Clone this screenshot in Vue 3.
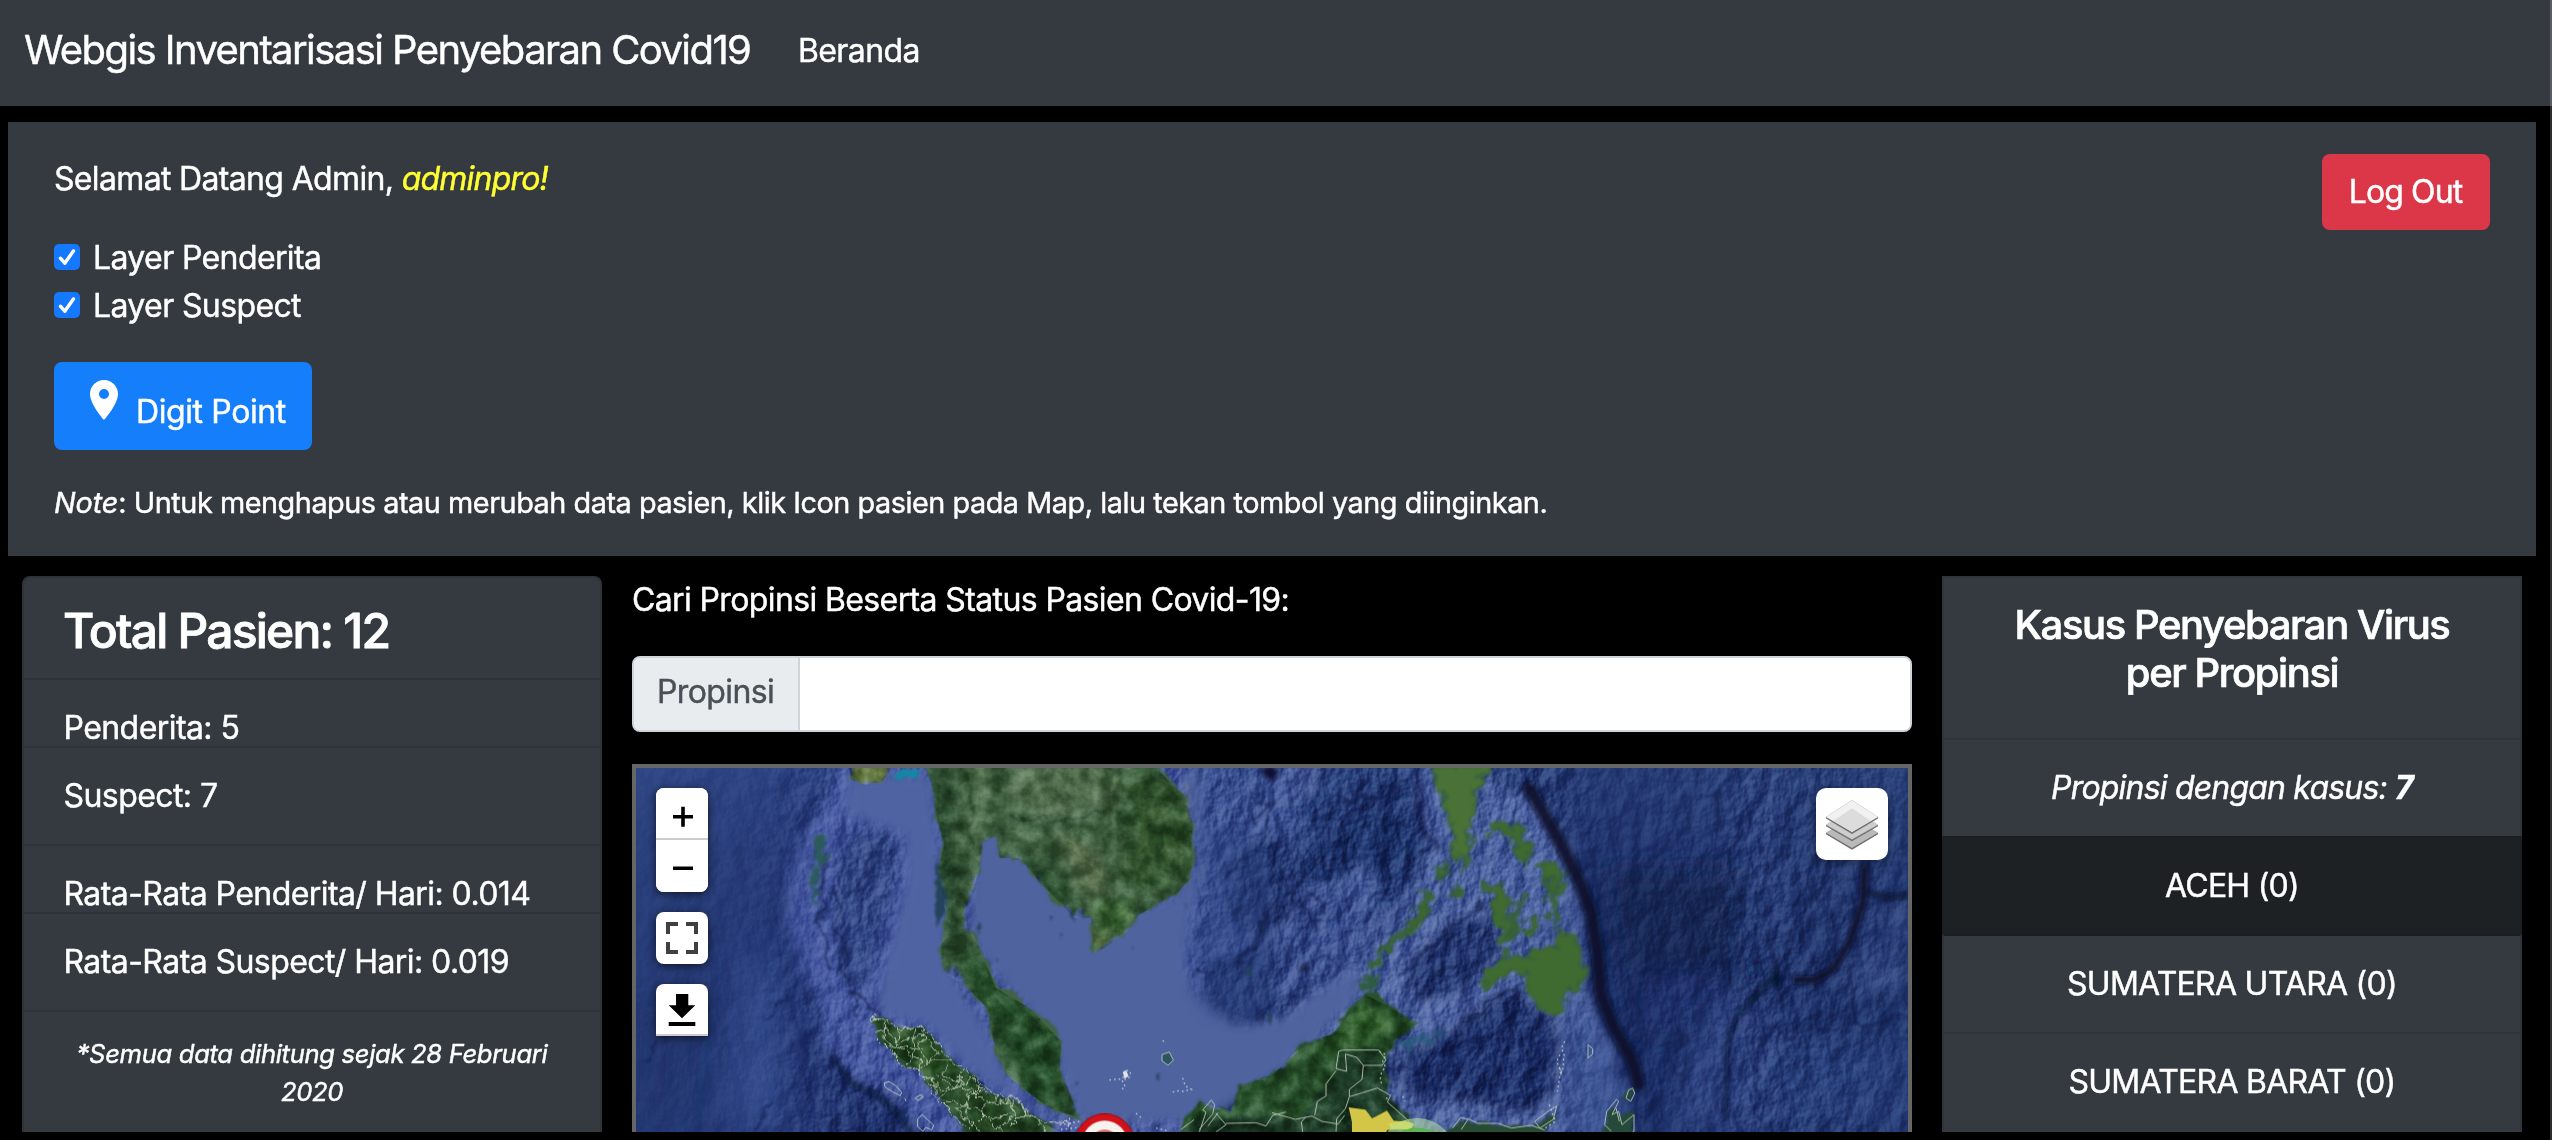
<script setup>
import { ref } from 'vue'

const layers = ref([
  { name: 'Layer Penderita', on: true },
  { name: 'Layer Suspect', on: true },
])

const stats = [
  { text: 'Penderita: 5', tight: true },
  { text: 'Suspect: 7', tight: false },
  { text: 'Rata-Rata Penderita/ Hari: 0.014', tight: true },
  { text: 'Rata-Rata Suspect/ Hari: 0.019', tight: false },
]

const provinces = [
  { name: 'ACEH', cases: 0, active: true },
  { name: 'SUMATERA UTARA', cases: 0, active: false },
  { name: 'SUMATERA BARAT', cases: 0, active: false },
]
</script>

<template>
  <div class="page">
    <nav class="navbar">
      <a class="brand">Webgis Inventarisasi Penyebaran Covid19</a>
      <a class="nav-link">Beranda</a>
    </nav>

    <div class="body">
      <section class="panel">
        <div class="panel-main">
          <p class="welcome">Selamat Datang Admin, <em>adminpro!</em></p>
          <div class="checks">
            <label v-for="l in layers" :key="l.name" class="check">
              <input v-model="l.on" type="checkbox" class="check-input" />
              <span class="box">
                <svg v-if="l.on" viewBox="0 0 26 26" width="26" height="26">
                  <path d="M6.4 14.2l4.4 5L19.4 7" fill="none" stroke="#fff" stroke-width="3.4" stroke-linecap="round" stroke-linejoin="round" />
                </svg>
              </span>
              <span>{{ l.name }}</span>
            </label>
          </div>
          <button class="btn digit">
            <svg class="pin" viewBox="0 0 14 20" width="28" height="40">
              <path d="M7 0C3.13 0 0 3.13 0 7c0 5.25 7 13 7 13s7-7.750 7-13c0-3.870-3.130-7-7-7zm0 9.500a2.500 2.500 0 1 1 0-5 2.500 2.500 0 0 1 0 5z" fill="#fff" />
            </svg>
            <span>Digit Point</span>
          </button>
          <p class="note"><em>Note</em>: Untuk menghapus atau merubah data pasien, klik Icon pasien pada Map, lalu tekan tombol yang diinginkan.</p>
        </div>
        <button class="btn logout">Log Out</button>
      </section>

      <div class="columns">
        <aside class="card totals">
          <h3>Total Pasien: 12</h3>
          <p v-for="s in stats" :key="s.text" class="stat" :class="{ tight: s.tight }">{{ s.text }}</p>
          <p class="since">*Semua data dihitung sejak 28 Februari 2020</p>
        </aside>

        <main class="center">
          <p class="search-title">Cari Propinsi Beserta Status Pasien Covid-19:</p>
          <div class="input-group">
            <span class="addon">Propinsi</span>
            <input class="field" type="text" />
          </div>

          <div class="map">
            <svg class="terrain" viewBox="0 0 3816 1092" width="1272" height="364" preserveAspectRatio="none">
              <defs>
                <linearGradient id="deep" x1="0" x2="1" y1="0" y2="0">
                  <stop offset="0" stop-color="#2a417f" />
                  <stop offset=".13" stop-color="#26397a" />
                  <stop offset=".45" stop-color="#263b78" />
                  <stop offset=".76" stop-color="#1b2e68" />
                  <stop offset="1" stop-color="#22376f" />
                </linearGradient>
                <linearGradient id="fall" x1="0" x2="0" y1="0" y2="1">
                  <stop offset="0" stop-color="#3a538f" stop-opacity=".35" />
                  <stop offset=".5" stop-color="#1b2c60" stop-opacity=".2" />
                  <stop offset="1" stop-color="#1b2e64" stop-opacity=".4" />
                </linearGradient>
                <linearGradient id="rough" x1="0" x2="1" y1="0" y2="0">
                  <stop offset="0" stop-color="#fff" stop-opacity=".12" />
                  <stop offset=".1" stop-color="#fff" stop-opacity=".25" />
                  <stop offset=".16" stop-color="#fff" stop-opacity=".8" />
                  <stop offset=".7" stop-color="#fff" stop-opacity="1" />
                  <stop offset=".76" stop-color="#fff" stop-opacity=".4" />
                  <stop offset=".84" stop-color="#fff" stop-opacity=".5" />
                  <stop offset=".88" stop-color="#fff" stop-opacity=".8" />
                  <stop offset="1" stop-color="#fff" stop-opacity=".5" />
                </linearGradient>
                <mask id="roughness"><rect width="3816" height="1092" fill="url(#rough)" /></mask>
                <filter id="b8" x="-20%" y="-20%" width="140%" height="140%"><feGaussianBlur stdDeviation="8" /></filter>
                <filter id="b18" x="-20%" y="-20%" width="140%" height="140%"><feGaussianBlur stdDeviation="18" /></filter>
                <filter id="b40" x="-40%" y="-40%" width="180%" height="180%"><feGaussianBlur stdDeviation="40" /></filter>
                <filter id="ridge" x="-10%" y="-10%" width="120%" height="120%" color-interpolation-filters="sRGB">
                  <feTurbulence type="fractalNoise" baseFrequency=".018" numOctaves="3" seed="5" result="n" />
                  <feDisplacementMap in="SourceGraphic" in2="n" scale="60" xChannelSelector="R" yChannelSelector="G" />
                  <feGaussianBlur stdDeviation="3.500" />
                </filter>
                <filter id="coast" x="-5%" y="-5%" width="110%" height="110%" color-interpolation-filters="sRGB">
                  <feTurbulence type="fractalNoise" baseFrequency=".03" numOctaves="3" seed="9" result="n" />
                  <feDisplacementMap in="SourceGraphic" in2="n" scale="30" xChannelSelector="R" yChannelSelector="G" />
                  <feGaussianBlur stdDeviation="2.500" />
                </filter>
                <filter id="isles" x="-5%" y="-5%" width="110%" height="110%" color-interpolation-filters="sRGB">
                  <feTurbulence type="fractalNoise" baseFrequency=".03" numOctaves="4" seed="21" result="n" />
                  <feDisplacementMap in="SourceGraphic" in2="n" scale="70" xChannelSelector="R" yChannelSelector="G" />
                  <feGaussianBlur stdDeviation="5" />
                </filter>
                <filter id="wobble" x="-5%" y="-5%" width="110%" height="110%" color-interpolation-filters="sRGB">
                  <feTurbulence type="fractalNoise" baseFrequency=".03" numOctaves="3" seed="3" result="n" />
                  <feDisplacementMap in="SourceGraphic" in2="n" scale="36" xChannelSelector="R" yChannelSelector="G" />
                </filter>
                <filter id="relief" x="0" y="0" width="100%" height="100%" color-interpolation-filters="sRGB">
                  <feTurbulence type="fractalNoise" baseFrequency=".016 .012" numOctaves="4" seed="12" />
                  <feColorMatrix values="0 0 0 0 0  0 0 0 0 0  0 0 0 0 0  1.500 0 0 0 -.2" />
                  <feDiffuseLighting surfaceScale="12" lighting-color="#fff"><feDistantLight azimuth="215" elevation="30" /></feDiffuseLighting>
                </filter>
                <filter id="soil" x="0" y="0" width="100%" height="100%" color-interpolation-filters="sRGB">
                  <feTurbulence type="fractalNoise" baseFrequency=".018" numOctaves="5" seed="33" />
                  <feColorMatrix values="1.800 0 0 0 -.45  1.800 0 0 0 -.45  1.800 0 0 0 -.45  0 0 0 0 1" />
                </filter>
                <clipPath id="sumatra">
                  <path d="M710 755L745 757 800 782 865 782 905 830 950 880 1000 910 1035 945 1060 970 1100 985 1150 1000 1180 1040 1230 1060 1270 1092H995L955 1040 905 990 880 960 850 910 800 885 760 845 720 805Z" />
                </clipPath>
                <clipPath id="land">
                  <path d="M640 0H765L740 40 690 50 645 35ZM870 0L890 60 900 140 925 230 905 300 930 440 915 540 920 610 984 650 1054 720 1075 830 1120 930 1240 1020 1330 1050 1272 900 1275 820 1180 720 1080 660 1030 540 984 440 1030 310 1040 220 1080 205 1092 270 1150 270 1220 350 1315 450 1365 450 1375 560 1470 495 1510 440 1620 380 1665 330 1670 170 1650 90 1560 0ZM710 755L865 782 950 880 1100 985 1180 1040 1270 1092H995L905 990 850 910 760 845ZM1634 1092L1689 1000 1784 1030 1814 950 1908 925 2008 820 2088 800 2188 680 2268 720 2348 770 2238 890 2328 1092Z" />
                </clipPath>
              </defs>

              <!-- sea floor -->
              <rect width="3816" height="1092" fill="url(#deep)" />
              <rect width="3816" height="1092" fill="url(#fall)" />
              <g filter="url(#b40)">
                <path d="M2150 60h330l40 180-260 120-360-40z" fill="#1f316a" />
                <path d="M2900 300h400v500h-300z" fill="#172655" />
                <path d="M3000 620h280v150h-280z" fill="#1c2f6b" />
                <path d="M3430 820h386v272h-386z" fill="#263c79" />
                <path d="M3680 560l136 40v60l-200-20zM3720 420l96-10v130z" fill="#3c5290" />
                <path d="M3380 0h40v560h-40z" fill="#2d4484" />
                <path d="M330 560l90 20 40 500h-200z" fill="#31498a" />
                <path d="M0 700l160 60-40 300L0 1000z" fill="#22356e" />
                <path d="M3180 740l200-80 80 430h-360z" fill="#2b407e" />
              </g>
              <g filter="url(#b18)">
                <path d="M600-20L560 120 490 230 460 340 455 450 490 590 550 700 560 830 640 920 770 980 870 1110H1700V-20Z" fill="#4459a0" />
                <path d="M650 190l90-15 55 40-20 160-50 180-40 130-70-50-30-220 20-150z" fill="#314786" />
                <path d="M1660-20h300l60 200-120 340-220 100z" fill="#3a5192" />
                <path d="M1908 450l90-120 150 20 110 80-100 140-250 150z" fill="#394e8d" />
                <path d="M1780 300l60-80 140 0 20 180-120 120-100-60z" fill="#22346e" />
                <path d="M1860 800L2040 650 2170 560 2260 440 2330 340 2380 250 2340 60 2360-20H2490L2620 60 2740 110 2800 250 2830 380 2850 620 2880 740 2950 880 2880 1000 2840 1110H2240L2270 850 2120 800 1900 960Z" fill="#495e9e" />
                <path d="M2160 300l50 10 20 60-60 40-60-50z" fill="#4c62a2" />
                <path d="M1960 0l100-10-30 80-90 10z" fill="#4b609f" />
                <path d="M2310 620L2340 560 2440 460 2510 430 2560 480 2600 540 2540 610 2450 680 2350 700Z" fill="#22346f" />
                <path d="M2300 850L2440 790 2620 660 2690 700 2760 760 2775 860 2740 990 2660 1040 2500 1000 2350 1000 2280 940Z" fill="#1c2d68" />
                <path d="M2800 760l60 20 120 200-40 120h-160z" fill="#3e5594" />
              </g>
              <g class="relief" mask="url(#roughness)">
                <rect width="3816" height="1092" filter="url(#relief)" />
              </g>

              <!-- shallow shelf -->
              <g filter="url(#b18)">
                <path d="M640 20H890L940 600 1060 800 1140 980 1290 1060 1240 1060 1000 910 870 770 740 740 720 700 770 500 810 330 810 200 700 160 620 130Z" fill="#4f64a3" />
                <path d="M1020 190H1180L1360 440 1600 400 1690 280 1640 20H1690L1704 300 1660 470 1650 590 1680 680 1800 765 1930 760 2060 670 2160 590 2170 680 2000 850 1860 970 1700 1060H1330L1240 800 1000 520Z" fill="#4f649f" />
              </g>
              <path d="M1704 180l-4 130 20 70-60 110 0 90 55 30-50 60 50 75 90 20 105-40V330l-60-150z" fill="#2f4583" opacity=".4" filter="url(#b18)" />

              <!-- trenches and ridges -->
              <g fill="none" stroke="#080f2a" stroke-linecap="round" stroke-linejoin="round" filter="url(#b8)">
                <path d="M2680 60L2770 220 2830 340 2865 430 2885 560 2895 680 2930 770 2990 880 3008 950" stroke-width="40" opacity=".9" />
                <path d="M3425 580L3405 640 3350 695 3300 750 3274 830 3270 1040" stroke-width="14" opacity=".75" />
                <path d="M3686 300L3682 400 3642 520 3590 605 3540 635 3480 636" stroke-width="24" opacity=".9" />
                <path d="M3700 375L3760 388 3816 382" stroke-width="18" opacity=".85" />
                <path d="M590 870L650 950 730 985 790 1040 820 1092" stroke-width="16" opacity=".7" />
                <path d="M2345 60l15 130 50 50" stroke-width="14" opacity=".5" />
                <path d="M3425 620v34" stroke-width="20" opacity=".8" />
              </g>
              <g fill="none" stroke="#121d48" stroke-width="7" stroke-linejoin="round" filter="url(#ridge)">
                <path d="M600 340l5 130 20 150 40 120M640 380l60-60 10-90M570 260l-20 160 30 180M640 660l60 60 30 30M440 690l-60 70M60 820l-40 60M400 1010l-50 82" opacity=".75" />
                <path d="M3402 790l90 15 110-30 140-15 74-22M3000 610l180-10 120-30M3360 700v240l15 152M3150 790l-40 70 20 90M3060 990l-50 60" opacity=".7" />
                <path d="M2300 620l90-90 130-110 10-40M2480 760l160-110M2350 700l60-80 90-60M2120 100l110-20 90-50M1770 330l110-110 30-120M1790 600l70-80 40-100M1660 625l70-10 30-30M2500 60l60-60" opacity=".75" />
                <path d="M1930 460l60-60 60 80M2010 600l40-30 60 20M2000 350l60 60-30 80M1850 160l50-60M1840 60l60 60" opacity=".6" />
              </g>
              <path d="M1990 600l20-12 14 16-22 12z" fill="#0a1030" filter="url(#b8)" />
              <path d="M1870 10l30-20 30 20-20 34z" fill="#0a1030" filter="url(#b8)" />

              <!-- land masses -->
              <g filter="url(#coast)">
                <path d="M640-10H765L740 40 690 50 645 35Z" fill="#61763f" />
                <path d="M765 20l30-14 55 0-6 24-60 4z" fill="#1686a6" />
                <path d="M870-10L890 60 900 140 925 230 905 300 900 360 930 440 915 540 920 610 960 590 984 650 1020 690 1054 720 1058 780 1075 830 1090 880 1120 930 1180 980 1240 1020 1300 1050 1330 1050 1320 1010 1290 960 1272 900 1275 820 1250 770 1180 720 1130 665 1080 660 1060 600 1030 540 1020 500 985 490 984 440 1000 380 1030 310 1040 220 1080 205 1092 270 1150 270 1185 310 1220 350 1240 380 1260 410 1300 410 1315 450 1330 420 1365 450 1362 540 1375 560 1410 525 1470 495 1510 440 1560 410 1620 380 1665 330 1678 270 1670 170 1650 90 1600 30 1560-10Z" fill="#416243" />
                <path d="M705 752L745 755 800 780 865 780 905 830 950 880 1000 910 1035 945 1060 970 1100 985 1150 1000 1180 1040 1230 1060 1270 1100H990L955 1040 905 985 880 960 850 910 800 885 760 845 720 805Z" fill="#2a4d2a" />
                <path d="M1634 1100L1654 1045 1689 1000 1734 1020 1784 1030 1804 980 1814 950 1908 925 1948 890 2008 820 2088 800 2138 720 2188 680 2218 670 2268 720 2348 770 2288 810 2258 860 2238 890 2253 960 2268 1000 2308 1050 2328 1100Z" fill="#28502b" />
                <path d="M2108 850L2228 848 2248 900 2263 980 2328 1060V1100H1640L1690 1040 1990 1050 2040 990 2100 910Z" fill="#20402a" />
                <path d="M2430 1100l40-40 120 10 100 8 40-30 30-20-10 40-60 40z" fill="#274b33" />
                <path d="M2905 1100L2912 1030 2930 1012 2952 1040 2992 1030 2994 1100ZM2965 990l18-32 14 16-20 30z" fill="#264a3a" />
              </g>
              <g filter="url(#b18)" clip-path="url(#land)">
                <path d="M880-10h70l40 240-20 200-10 160-60 20z" fill="#2d5030" />
                <path d="M990 0h80l-20 190-60 50z" fill="#4e6c49" />
                <path d="M1130-10H1420l0 140-220 20-90-40z" fill="#526f4f" />
                <path d="M1430 20L1600 20 1670 180 1670 310 1560 380 1440 340 1480 180Z" fill="#31552f" />
                <path d="M1260 190l120 50 40 130-60 20-60-90z" fill="#5c7250" />
                <path d="M1180 280l80 20 60 110-60 0z" fill="#284b2b" />
                <path d="M1370 400l140 0-50 90-60 20z" fill="#416b38" />
                <path d="M1362 510l70-20-50 60z" fill="#5f7440" />
                <path d="M960 560l80 0 120 140 120 110 0 150 40 100-140-60-100-200z" fill="#28502a" />
                <path d="M2150 700l150 60-80 60-180 40z" fill="#2f5c2b" />
                <path d="M760 800l100 10 80 90-60 30z" fill="#23461f" />
                <path d="M960 940l90 40 80 60-90 60z" fill="#2a4f25" />
              </g>
              <g fill="none" filter="url(#ridge)" stroke-width="9">
                <path d="M1120 140l80 20 90-10 120-8" stroke="#28452d" opacity=".9" />
                <path d="M1290 220l70 70 40 60M1430 20v150M1640 40l20 120" stroke="#7e8f6c" opacity=".4" />
                <path d="M1000 20l10 220M920 100l20 300M1590 120l-30 120 40 80M1500 60l-60 120" stroke="#24462a" opacity=".7" />
              </g>

              <!-- island arcs -->
              <g filter="url(#isles)" fill="#3f6a30" stroke="#335e38" stroke-width="8" stroke-linejoin="round">
                <path d="M2388-10H2568L2548 30 2508 70 2518 170 2498 190 2498 270 2478 295 2458 270 2453 190 2428 110 2408 60Z" fill="#4a7136" />
                <path d="M2548 170L2608 150 2648 190 2688 240 2672 290 2638 230 2598 190 2558 200Z" />
                <path d="M2708 280L2758 280 2783 330 2768 380 2728 330Z" />
                <path d="M2538 340L2598 350 2628 400 2608 440 2638 480 2608 520 2578 470 2568 400Z" />
                <path d="M2650 490l50-50 16 36-40 24zM2735 330l18 20 10 110-16 10zM2650 380l14 4-30 120-10-6z" />
                <path d="M2548 620L2578 590 2618 550 2668 580 2718 540 2758 540 2778 480 2818 510 2845 600 2840 665 2790 660 2795 745 2748 745 2708 720 2670 660 2678 610 2608 615 2560 655 2538 650Z" />
                <path d="M2200 600L2248 530 2308 475 2345 430 2362 370 2390 375 2375 440 2325 490 2262 545 2220 600Z" fill="#3c672f" />
                <path d="M2390 300l30-14 14 24-26 26zM2450 370l16-10 8 24-16 8z" />
                <path d="M2180 650l20-30 20 20-10 30z" fill="#2b5b48" />
                <path d="M540 200l24-2 4 60-16 60-22-10zM526 320l18-6 0 110-16-20z" fill="#2b5a58" stroke="none" />
                <path d="M2290 820l70-20 60-12-20 30-110 24z" fill="#245a78" stroke="none" opacity=".7" />
              </g>
              <g fill="#24435c" filter="url(#coast)">
                <path d="M895 260l20 60 20 80-30 80-12-30 10-70zM1210 310l10 40-14-20zM1310 420l6 46-14-24zM1240 440l10 12-10 8zM1275 495l10 6-8 8zM1486 540l10 6-8 8zM1080 565l10 6-8 8zM985 690l12-4 2 12zM1316 945l10 4-4 12zM1560 920l12 6-6 14zM1545 1068l10 6-8 8zM1830 600l14-10 8 26-16 14zM1888 740l14-8 4 36-14-6zM1640 410l8 6-4 6zM1020 470l10-10 10 20-14 20zM600 112l8-2 0 10z" />
              </g>
              <rect width="3816" height="1092" clip-path="url(#land)" filter="url(#soil)" class="soil" />

              <!-- district boundaries -->
              <g fill="none" stroke="#c4d1bf" stroke-width="3" stroke-linejoin="round" opacity=".85">
                <g clip-path="url(#sumatra)">
                  <path filter="url(#wobble)" d="M690 800l60-10 40 30 70-20 50 60M745 740v60l30 60 30 40M790 770l-10 60 70 50 0 50M830 770l10 70-30 60M880 770l-30 60 20 50 80 0M900 850l-60 70 60 20 0 60M950 860l-30 60 60 20-80 50M760 830l110 20M1000 890l-50 60 60 20-40 60 70 60M1050 940l-70 70 70 20-60 60M870 960l130 0 60 50 80-20M930 1000l60 10 20 80M1100 970l-60 60 60 70M1130 990l10 60-60 30M1180 1020l-60 60M1060 1050l140-10 30 60M905 920l50 40 50-30 40 50" />
                </g>
                <path filter="url(#wobble)" d="M710 755L745 757 800 782 865 782 905 830 950 880 1000 910 1035 945 1060 970 1100 985 1150 1000 1180 1040 1230 1060 1300 1070M720 805L760 845 800 885 850 910 880 960 905 990 955 1040 995 1092" />
                <path d="M745 945l14-4 20 12 18 20-4 10-24-12-22-14zM702 752l10-8 6 10-12 8zM715 738l6 4M806 990l4 10M838 990l14-10 10 6-16 12zM845 1052l14-12 34 32-6 14-18-8-8 12-16-14zM1690 1092l20-60-10-6 26-30 10 14-6 28-40 46M1740 1036l30 34-30 22M1746 1034l-30 40M1770 1066l90-2 30 10 20-32 40-10M1634 1085l40-30" />
                <path d="M2108 850l12-4h108l22 30-12 16h-56l-20-24-34-10 4 52-32-8zM2100 908l-30 40 0 36-26 16-8 42M2182 892l-4 42-38 30 0 22 40-12 44-14 40 22-10 20 70 62M2140 986l-12 36-26 30-2 40M1908 1034l70 20 50-10 30 16 48 8 20-26M2000 1092l-4-30 14-16" />
                <path d="M2450 1080l24-32 22 6-20 30M2496 1052l30 14 60 0 40 14 60-8 40 14M2696 1060l40-30 26-16-10 40-40 26zM2770 900l8 10-4 12M2856 830l14 12 0 16-14 12zM2978 966l12-6 6 16-12 24-14-10zM2912 1030l30-36 6 6-20 40 20-10 10 40 36-30v50l-40 30M2912 1030l-6 40 20 20M2940 1020l10 40" />
              </g>
              <g fill="none" stroke="#e6ebe6" stroke-width="4" stroke-dasharray="5 9" opacity=".75">
                <path d="M2230 850l20 10-10 20 8 16-12 20-4 20 8 16M2250 990l12 6M2300 985l8 14M2786 820l-10 20 8 20-4 50M2772 860l-10 20 12 30-10 60M2740 1010l18 50-30 20" />
                <path d="M1420 936l40-4 10-26 14 6-6 20-20 4 10 20-14 10M1580 818l8 6M1610 972l20-4M1640 930l8 24 18 10-36 8M1270 1070l60-10M1290 1056l20 34M1275 1084l60-6M1300 1050l8 40M1500 1036l20 16M1560 1080l40 10M708 744l16 16" />
              </g>
              <path d="M1578 860l22-8 12 24-16 16-18-14z" fill="#2d5560" stroke="#c4d1bf" stroke-width="2.500" />
              <path d="M1460 912l10-6 8 18-12 8z" fill="#dfe6e6" />

              <!-- case overlays -->
              <path d="M2138 1018l50 7 20 26 45-23 20 30 58 7-3 16-75 5-8 26h-97v-50z" fill="#d3c547" />
              <circle cx="2343" cy="1167" r="117" fill="#b0dca4" opacity=".6" />
              <circle cx="2343" cy="1185" r="106" fill="#59b544" opacity=".85" />
              <path d="M2258 1066l50-8 27 12-20 14-50-2z" fill="#c8db70" />
              <circle cx="1406" cy="1127" r="89" fill="#d1121b" stroke="#a80f16" stroke-width="4" />
              <circle cx="1406" cy="1127" r="69" fill="#f6f2f0" />
              <circle cx="1406" cy="1127" r="42" fill="#cf6a68" />
            </svg>

            <div class="controls">
              <div class="ctl zoom">
                <button class="ctl-btn" aria-label="Zoom in">
                  <svg viewBox="0 0 52 50" width="52" height="50"><path d="M17 28.700H37M27 18.700V38.700" stroke="#000" stroke-width="3.600" /></svg>
                </button>
                <button class="ctl-btn" aria-label="Zoom out">
                  <svg viewBox="0 0 52 52" width="52" height="52"><path d="M17 28.300H37" stroke="#000" stroke-width="3.600" /></svg>
                </button>
              </div>
              <button class="ctl" aria-label="Full screen">
                <svg viewBox="0 0 52 52" width="52" height="52">
                  <path d="M12 22V12H22M30 12H40V22M40 30V40H30M22 40H12V30" fill="none" stroke="#404040" stroke-width="4" />
                </svg>
              </button>
              <button class="ctl download" aria-label="Download">
                <svg viewBox="0 0 52 50" width="52" height="50">
                  <path d="M20 10H32.300V21.300H39.300L26 34.300 12.700 21.300H20ZM12.700 38H39.300V42H12.700Z" />
                </svg>
              </button>
            </div>
            <button class="layers" aria-label="Layers">
              <svg viewBox="0 0 72 72" width="72" height="72">
                <path d="M10 45L36 28.500 62 45V46.200L36 61.800 10 46.200Z" fill="#6f6f6f" />
                <path d="M10 44.800L36 29 62 44.800 36 60Z" fill="#b9b9b9" />
                <path d="M10 37L36 20.500 62 37V38.200L36 53.200 10 38.200Z" fill="#737373" />
                <path d="M10 36.800L36 21 62 36.800 36 51.400Z" fill="#cdcdcd" />
                <path d="M10 29L36 12 62 29V30.500L36 46 10 30.500Z" fill="#6f6f6f" />
                <path d="M10 28.900L36 12 62 28.900 36 44Z" fill="#f1f1f1" />
                <path d="M17.500 32.800L36 20.200 54.500 32.800 36 44Z" fill="#dcdcdc" />
              </svg>
            </button>
          </div>
        </main>

        <aside class="card cases">
          <h4>Kasus Penyebaran Virus<br />per Propinsi</h4>
          <p class="summary">Propinsi dengan kasus: <b>7</b></p>
          <p v-for="p in provinces" :key="p.name" class="province" :class="{ active: p.active }">{{ p.name }} ({{ p.cases }})</p>
        </aside>
      </div>
    </div>
  </div>
</template>

<style>
body {
  background: #000;
}
</style>

<style scoped>
.page {
  box-sizing: border-box;
  width: 2552px;
  height: 1140px;
  overflow: hidden;
  background: #000;
  color: #fff;
  font: 400 32px/48px Inter, "Liberation Sans", sans-serif;
  letter-spacing: -0.62px;
  -webkit-text-stroke: 0.45px currentColor;
}
.page *,
.page *::before {
  box-sizing: border-box;
}
p,
h3,
h4 {
  margin: 0;
}
button {
  padding: 0;
  border: 0;
  color: inherit;
  font: inherit;
  letter-spacing: inherit;
}
svg {
  display: block;
}

.navbar {
  display: flex;
  align-items: flex-start;
  height: 106px;
  padding: 20px 24px 0;
  background: #343a40;
  border-right: 2px solid #5a5e62;
}
.brand {
  width: 774px;
  font-size: 40px;
  line-height: 60px;
  letter-spacing: -1.57px;
  white-space: nowrap;
}
.nav-link {
  padding-top: 7px;
}

.body {
  display: flex;
  flex-direction: column;
  gap: 20px;
  height: 1034px;
  padding: 16px 14px 8px 8px;
  border-right: 2px solid #2d2d2d;
}
.panel {
  display: flex;
  flex: none;
  justify-content: space-between;
  align-items: flex-start;
  height: 434px;
  padding: 32px 46px;
  background: #343a40;
}
.welcome {
  padding-top: 1px;
  line-height: 47px;
  letter-spacing: -0.66px;
}
.welcome em {
  color: #ffff33;
  letter-spacing: -0.79px;
}
.checks {
  margin-top: 32px;
}
.check {
  display: flex;
  align-items: center;
  gap: 13px;
}
.check-input {
  display: none;
}
.box {
  width: 26px;
  height: 26px;
  margin-bottom: 2px;
  border-radius: 5px;
  background: #1479ff;
}
.btn {
  border-radius: 8px;
  color: #fff;
}
.digit {
  display: flex;
  gap: 18px;
  width: 258px;
  height: 88px;
  margin-top: 32px;
  padding: 18px 0 0 36px;
  background: #157efb;
  letter-spacing: -0.4px;
}
.digit span {
  padding-top: 8px;
  white-space: nowrap;
}
.note {
  margin-top: 31px;
  font-size: 28.8px;
  line-height: 43.2px;
  letter-spacing: -0.45px;
  white-space: nowrap;
}
.note em {
  letter-spacing: -0.1px;
}
.logout {
  width: 168px;
  height: 76px;
  padding-right: 1px;
  background: #dc3748;
  letter-spacing: -0.88px;
}

.columns {
  display: flex;
  flex: 1;
  min-height: 0;
  padding: 0 14px;
}
.card {
  flex: none;
  width: 580px;
  background: #343a40;
  border: 2px solid #2e3338;
  border-bottom: 0;
}
.totals {
  overflow: hidden;
  border-radius: 8px 8px 0 0;
}
.totals h3 {
  height: 100px;
  padding: 24px 0 0 39px;
  font-size: 48px;
  font-weight: 500;
  line-height: 57.6px;
  letter-spacing: -1.8px;
  -webkit-text-stroke-width: 0.8px;
}
.stat {
  height: 98px;
  padding: 24px 0 0 39.5px;
  border-top: 2px solid #2d3238;
  white-space: nowrap;
  letter-spacing: -0.57px;
}
.stat.tight {
  height: 68px;
}
.since {
  padding: 23px 40px 0;
  border-top: 2px solid #2d3238;
  font-size: 25.6px;
  font-style: italic;
  line-height: 38.4px;
  letter-spacing: -0.32px;
  text-align: center;
}

.center {
  display: flex;
  flex-direction: column;
  width: 1280px;
  margin: 0 30px;
}
.search-title {
  flex: none;
}
.input-group {
  display: flex;
  flex: none;
  height: 76px;
  margin: 32px 0;
  overflow: hidden;
  border: 2px solid #ced4da;
  border-radius: 8px;
  background: #fff;
}
.addon {
  width: 166px;
  padding: 10px 0 0 23px;
  background: #e9ecef;
  border-right: 2px solid #ced4da;
  color: #495057;
}
.field {
  flex: 1;
  border: 0;
  outline: 0;
  background: #fff;
}
.map {
  position: relative;
  flex: 1;
  min-height: 0;
  overflow: hidden;
  border: 4px solid #666;
  border-bottom: 0;
  background: #273c78;
}
.relief {
  mix-blend-mode: soft-light;
  opacity: 0.65;
}
.soil {
  mix-blend-mode: soft-light;
  opacity: 0.6;
}
.controls {
  position: absolute;
  top: 20px;
  left: 20px;
  display: flex;
  flex-direction: column;
  gap: 20px;
}
.ctl {
  width: 52px;
  height: 52px;
  overflow: hidden;
  border-radius: 8px;
  background: #fff;
  box-shadow: 0 2px 10px rgba(0, 0, 0, 0.65);
}
.zoom {
  height: 104px;
}
.ctl-btn {
  display: block;
  background: #fff;
}
.ctl-btn:first-child {
  border-bottom: 2px solid #ccc;
}
.download {
  border-bottom: 2px solid #ccc;
  border-radius: 8px 8px 0 0;
}
.layers {
  position: absolute;
  top: 20px;
  right: 20px;
  width: 72px;
  height: 72px;
  border-radius: 10px;
  background: #fff;
  box-shadow: 0 2px 10px rgba(0, 0, 0, 0.4);
}

.cases {
  height: 556px;
  overflow: hidden;
  padding: 0;
  text-align: center;
  border: 0;
}
.cases h4 {
  height: 162px;
  padding-top: 23px;
  border: solid #30353b;
  border-width: 2px 2px 0;
  font-size: 40px;
  font-weight: 500;
  line-height: 48px;
  letter-spacing: -1.42px;
  -webkit-text-stroke-width: 0.7px;
}
.summary,
.province {
  height: 98px;
  padding-top: 24px;
  border: solid #2f343a;
  border-width: 2px 2px 0;
  letter-spacing: -0.74px;
}
.summary {
  font-style: italic;
  letter-spacing: -0.81px;
}
.province.active {
  height: 100px;
  margin-bottom: -2px;
  border: 2px solid #1b1f22;
  background: #1d2124;
}
.province.active + .province {
  border-top-color: transparent;
}
</style>
